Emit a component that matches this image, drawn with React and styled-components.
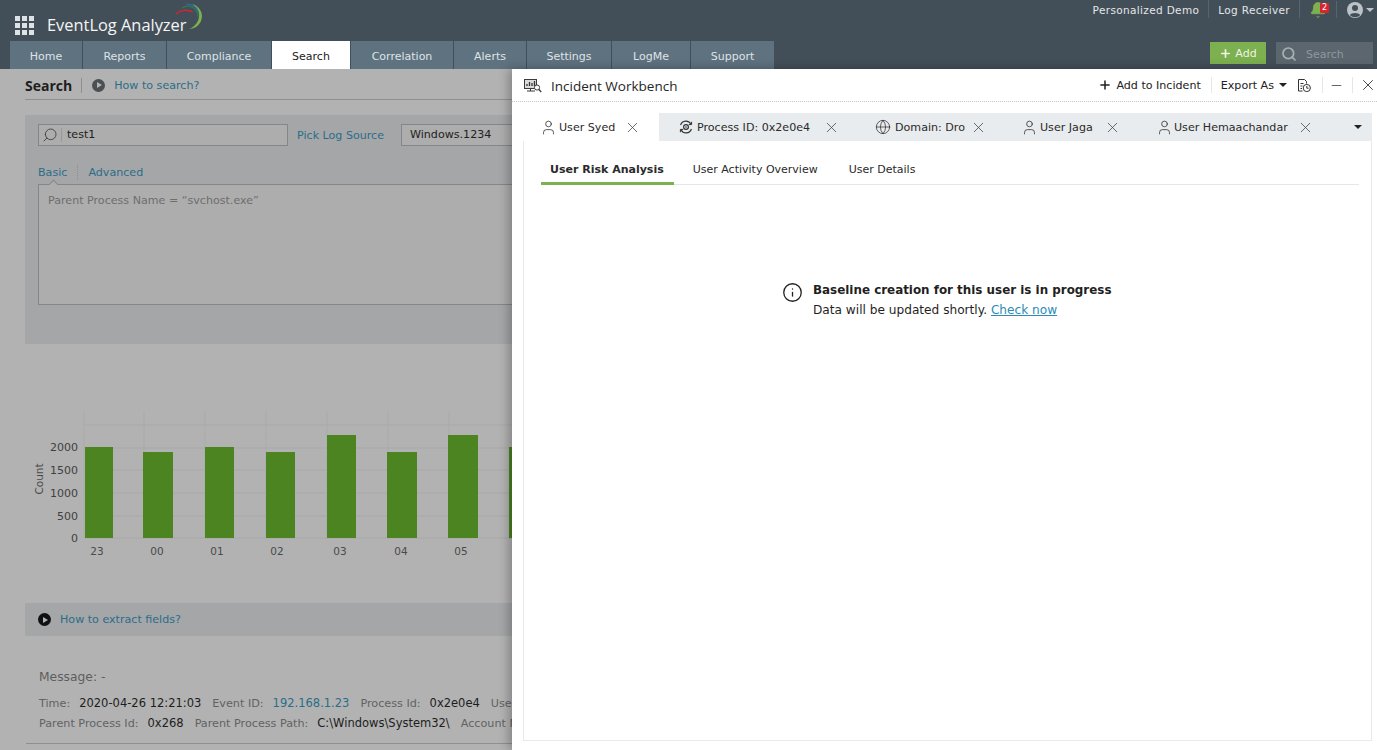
import React from "react";
import styled, { createGlobalStyle } from "styled-components";
import { User, X, Globe, Plus, Minus, Search as SearchIcon, Info, Bell } from "lucide-react";

const Global = createGlobalStyle`
  html, body { margin: 0; padding: 0; background: #b2b2b2; }
  * { box-sizing: border-box; }
  body { font-family: "DejaVu Sans", Verdana, sans-serif; font-size: 11.1px; }
`;

const Page = styled.div`
  position: relative;
  width: 1377px;
  height: 750px;
  overflow: hidden;
  background: #b2b2b2;
`;

const Header = styled.header`
  height: 69px;
  background: #434f58;
  display: flex;
  flex-direction: column;
`;
const TopRow = styled.div`
  height: 41px;
  display: flex;
  justify-content: space-between;
  padding: 0 3px 0 15px;
`;
const Brand = styled.div`
  display: flex;
  align-items: flex-start;
  padding-top: 16px;
`;
const Grid9 = styled.div`
  display: grid;
  grid-template-columns: repeat(3, 5px);
  grid-auto-rows: 5px;
  gap: 2px;
  margin-right: 13px;
  span { background: #dfe2e4; }
`;
const BrandName = styled.div`
  font-family: "Open Sans", sans-serif;
  font-size: 16.4px;
  line-height: 19px;
  color: #f4f5f5;
  position: relative;
  margin-top: -1px;
`;
const LogoArcs = styled.svg`
  position: absolute;
  left: 127px;
  top: -13px;
`;
const TopRight = styled.div`
  display: flex;
  align-items: flex-start;
  color: #e4e6e8;
  font-size: 10.5px;
  letter-spacing: 0.35px;
`;
const TopLink = styled.span`
  padding: 0 9px;
  border-right: 1px solid #59646c;
  height: 18px;
  line-height: 20px;
`;
const BellWrap = styled.span`
  position: relative;
  display: flex;
  margin: 1px 9px 0 9px;
  color: #7db04f;
`;
const Badge = styled.span`
  position: absolute;
  left: 11px;
  top: 2px;
  width: 9px;
  height: 10px;
  background: #d9232e;
  border-radius: 1px;
  color: #fff;
  font-size: 8px;
  line-height: 10px;
  text-align: center;
  letter-spacing: 0;
`;
const Avatar = styled.span`
  display: flex;
  align-items: center;
  gap: 3px;
  margin-top: 1px;
  padding-left: 10px;
  border-left: 1px solid #59646c;
  height: 17px;
  color: #bcc2c7;
`;
const Caret = styled.span`
  display: inline-block;
  width: 0;
  height: 0;
  border-left: ${p => p.$s ?? 4}px solid transparent;
  border-right: ${p => p.$s ?? 4}px solid transparent;
  border-top: ${p => p.$s ?? 4}px solid ${p => p.$c ?? "currentColor"};
`;
const NavRow = styled.div`
  height: 28px;
  display: flex;
  align-items: flex-end;
  justify-content: space-between;
  padding: 0 4px 0 10px;
`;
const NavTabs = styled.nav`
  display: flex;
  gap: 1px;
  height: 28px;
`;
const NavTab = styled.a`
  width: ${p => p.$w}px;
  display: flex;
  align-items: center;
  justify-content: center;
  padding-top: 3px;
  font-size: 11px;
  background: ${p => (p.$active ? "#ffffff" : "#5f7280")};
  color: ${p => (p.$active ? "#222" : "#dfe3e6")};
`;
const NavTools = styled.div`
  display: flex;
  gap: 10px;
  padding-bottom: 5px;
`;
const AddBtn = styled.button`
  width: 56px;
  height: 22px;
  border: 0;
  padding: 0;
  background: #7db04f;
  color: #eef4e8;
  font: inherit;
  font-size: 11px;
  display: flex;
  align-items: center;
  justify-content: center;
  gap: 3px;
`;
const TopSearch = styled.div`
  width: 97px;
  height: 22px;
  background: #5b666e;
  color: #8f989e;
  display: flex;
  align-items: center;
  padding: 2px 0 0 5px;
  gap: 9px;
  font-size: 11px;
`;

const Main = styled.main`
  padding: 0 0 0 25px;
`;
const TitleRow = styled.div`
  height: 31px;
  padding-top: 2px;
  display: flex;
  align-items: center;
  border-bottom: 1px solid #8f8f8f;
`;
const PageTitle = styled.h1`
  margin: 0;
  font-size: 14px;
  font-weight: 700;
  color: #1e1e1e;
  font-family: "Open Sans", sans-serif;
  padding-right: 9px;
  border-right: 1px solid #8e8e8e;
  line-height: 15px;
`;
const HelpLink = styled.a`
  color: #2b6d88;
`;
const PlayDot = styled.span`
  width: 13px;
  height: 13px;
  border-radius: 50%;
  background: ${p => p.$c};
  display: inline-flex;
  align-items: center;
  justify-content: center;
  margin: 0 9px 0 ${p => p.$ml}px;
  &::after {
    content: "";
    border-left: 5px solid #b2b2b2;
    border-top: 3px solid transparent;
    border-bottom: 3px solid transparent;
    margin-left: 1px;
  }
`;
const QueryPanel = styled.section`
  margin-top: 15px;
  height: 229px;
  background: #a5a6a8;
  padding: 9px 13px;
`;
const QueryRow = styled.div`
  display: flex;
  align-items: center;
  height: 22px;
`;
const SearchBox = styled.div`
  width: 250px;
  height: 22px;
  border: 1px solid #858687;
  background: #adadad;
  display: flex;
  align-items: center;
  color: #222;
  padding-left: 3px;
  span { margin-left: 3px; padding-left: 5px; border-left: 1px solid #989898; line-height: 14px; }
`;
const PickLink = styled.a`
  margin-left: 9px;
  color: #2b6d88;
`;
const SourceBox = styled.div`
  margin-left: 17px;
  width: 400px;
  height: 22px;
  border: 1px solid #858687;
  background: #adadad;
  padding-left: 8px;
  line-height: 20px;
  color: #222;
`;
const ModeRow = styled.div`
  display: flex;
  margin-top: 19px;
  height: 15px;
  line-height: 15px;
  color: #2b6d88;
  span:first-child { padding-right: 10px; border-right: 1px dotted #8e8e8e; }
  span:last-child { padding-left: 10px; }
`;
const QueryText = styled.div`
  position: relative;
  margin-top: 4px;
  height: 121px;
  border: 1px solid #858687;
  background: #adadad;
  padding: 9px 9px;
  color: #6e6e6e;
  &::before {
    content: "";
    position: absolute;
    left: 11px;
    top: -4px;
    width: 6px;
    height: 6px;
    background: #adadad;
    border-left: 1px solid #858687;
    border-top: 1px solid #858687;
    transform: rotate(45deg);
  }
`;
const ChartSvg = styled.svg`
  display: block;
  margin: 53px 0 0 -25px;
`;
const ExtractRow = styled.div`
  margin-top: 40px;
  height: 33px;
  background: #a5a6a8;
  display: flex;
  align-items: center;
`;
const Details = styled.div`
  padding-left: 13px;
  margin-top: 32px;
  border-bottom: 1px solid #8f8f8f;
  margin-left: 1px;
  height: 76px;
`;
const MsgLine = styled.div`
  color: #5e5e5e;
  font-size: 12.3px;
  line-height: 18px;
`;
const Fields = styled.div`
  display: flex;
  height: 20px;
  align-items: center;
  white-space: nowrap;
  margin-top: ${p => p.$mt ?? 0}px;
  font-size: 11.5px;
`;
const FieldKey = styled.span`
  color: #626262;
  font-size: 11.2px;
  margin-right: 9px;
`;
const FieldVal = styled.span`
  color: ${p => (p.$link ? "#2b6d88" : "#1d1d1d")};
  margin-right: 11px;
`;

const Drawer = styled.aside`
  position: absolute;
  left: 512px;
  top: 69px;
  width: 865px;
  height: 681px;
  background: #fff;
  box-shadow: -3px 0 10px rgba(0, 0, 0, 0.28);
  display: flex;
  flex-direction: column;
`;
const DrawerHead = styled.div`
  height: 33px;
  flex: none;
  display: flex;
  align-items: center;
  justify-content: space-between;
  border-bottom: 1px dotted #c6c6c6;
  padding: 0 0 0 12px;
`;
const DrawerTitle = styled.div`
  display: flex;
  align-items: center;
  gap: 9px;
  padding-top: 1px;
  font-family: "Open Sans", sans-serif;
  font-size: 13.5px;
  color: #262626;
`;
const DrawerActions = styled.div`
  display: flex;
  align-items: center;
  color: #222;
`;
const ActionGroup = styled.span`
  display: flex;
  align-items: center;
  gap: ${p => p.$gap ?? 5}px;
  height: 16px;
  padding: 0 ${p => p.$pr ?? 10}px 0 ${p => p.$pl ?? 9}px;
  border-right: ${p => (p.$last ? "0" : "1px solid #e6e6e6")};
`;
const Frame = styled.div`
  margin: 11px 5px 9px 11px;
  flex: 1;
  border: 1px solid #e9e9e9;
  border-top: 0;
  display: flex;
  flex-direction: column;
`;
const TabBar = styled.div`
  height: 28px;
  flex: none;
  background: #e9ecee;
  display: flex;
  margin: 0 -1px;
`;
const Tab = styled.div`
  width: ${p => p.$w}px;
  padding-left: ${p => p.$pl}px;
  background: ${p => (p.$active ? "#fff" : "transparent")};
  display: flex;
  align-items: center;
  color: #2a2a2a;
  white-space: nowrap;
`;
const TabLabel = styled.span`
  margin: 0 ${p => p.$mr}px 0 ${p => p.$ml}px;
`;
const TabCaret = styled.div`
  flex: 1;
  display: flex;
  align-items: center;
  justify-content: center;
  padding-left: 13px;
  color: #222;
`;
const SubTabs = styled.div`
  margin: 14px 12px 0 17px;
  height: 30px;
  flex: none;
  display: flex;
  border-bottom: 1px solid #e6e6e6;
`;
const SubTab = styled.div`
  height: 30px;
  padding: 2px ${p => p.$pr ?? 15}px 0 ${p => p.$pl ?? 15}px;
  display: flex;
  align-items: center;
  font-size: 11px;
  font-weight: ${p => (p.$active ? 700 : 400)};
  color: #2a2a2a;
  border-bottom: 3px solid ${p => (p.$active ? "#7db04f" : "transparent")};
`;
const Notice = styled.div`
  margin: 95px 0 0 258px;
  display: flex;
  align-items: flex-start;
  gap: 10px;
  color: #1f1f1f;
  svg { margin-top: 2px; }
`;
const NoticeText = styled.div`
  font-size: 12.15px;
  line-height: 20px;
  strong { display: block; font-weight: 700; font-size: 11.92px; }
  a { color: #2b8cb8; text-decoration: underline; }
`;

const bars = [
  [85, 28, 447, "23", 97],
  [143, 30, 452, "00", 157],
  [205, 29, 447, "01", 217],
  [266, 29, 452, "02", 277],
  [327, 29, 435, "03", 340],
  [387, 30, 452, "04", 401],
  [448, 30, 435, "05", 461],
];
const yTicks = [["2000", 447], ["1500", 470], ["1000", 493], ["500", 516], ["0", 538]];

function Chart() {
  const o = 397;
  return (
    <ChartSvg width="512" height="166" viewBox={`0 ${o} 512 166`}>
      {[425, 448, 470, 493, 516, 538].map(y => (
        <line key={y} x1="84" x2="512" y1={y} y2={y} stroke="#a8a8a8" />
      ))}
      {[84, 144, 205, 266, 327, 388, 449].map(x => (
        <line key={x} x1={x} x2={x} y1="411" y2="538" stroke="#aaaaaa" />
      ))}
      {bars.map(([x, w, y]) => (
        <rect key={x} x={x} y={y} width={w} height={538 - y} fill="#4b8420" />
      ))}
      <rect x="509" y="447" width="3" height="91" fill="#4b8420" />
      {yTicks.map(([t, y]) => (
        <text key={t} x="78" y={y + 4} textAnchor="end" fontSize="11" fill="#3f3f3f" fontFamily="DejaVu Sans">{t}</text>
      ))}
      {bars.map(([x, , , t, cx]) => (
        <text key={t} x={cx} y="555" textAnchor="middle" fontSize="10.5" fill="#4a4a4a" fontFamily="DejaVu Sans">{t}</text>
      ))}
      <text transform="translate(43 479) rotate(-90)" textAnchor="middle" fontSize="10.5" fill="#4a4a4a" fontFamily="DejaVu Sans">Count</text>
    </ChartSvg>
  );
}

const WorkbenchIcon = () => (
  <svg width="18" height="16" viewBox="0 0 18 16" fill="none" stroke="#3c3c3c">
    <rect x="0.5" y="1.5" width="12" height="9" fill="#dcdcdc" />
    <path d="M3 8V6M5.5 8V4M8 8V5M10.5 8V3" strokeWidth="1.3" stroke="#333" />
    <path d="M3 13h8M6.5 10.5V13" />
    <circle cx="13" cy="9.5" r="2.6" fill="#fff" />
    <path d="M15 11.5l2.2 2.5" strokeWidth="1.4" />
  </svg>
);
const ProcessIcon = () => (
  <svg width="14" height="14" viewBox="0 0 14 14" fill="none" stroke="#333" strokeWidth="1.2">
    <path d="M1.6 5A5.6 5.6 0 0 1 12 4.2M12.4 9A5.6 5.6 0 0 1 2 9.8" />
    <path d="M12.6 1.8V4.6H9.8M1.4 12.2V9.4H4.2" strokeWidth="1" />
    <circle cx="7" cy="7" r="2.4" />
    <circle cx="7" cy="7" r="0.8" fill="#333" stroke="none" />
  </svg>
);
const HistoryIcon = () => (
  <svg width="15" height="15" viewBox="0 0 15 15" fill="none" stroke="#333" strokeWidth="1">
    <path d="M5.5 13H1.5V1.5H7.5L9.5 3.5V5.5" />
    <path d="M3.5 5.5H6.5M3.5 8H5.5M3.5 10.5H5" />
    <circle cx="9.8" cy="10" r="3.6" />
    <path d="M9.8 8V10.2H11.6" />
  </svg>
);
const AvatarIcon = () => (
  <svg width="16" height="16" viewBox="0 0 16 16">
    <circle cx="8" cy="8" r="8" fill="#bcc2c7" />
    <circle cx="8" cy="6" r="3" fill="#434f58" />
    <path d="M2.8 13.2C4 10.4 12 10.4 13.2 13.2A7.6 7.6 0 0 1 2.8 13.2Z" fill="#434f58" />
  </svg>
);

const tabs = [
  { w: 136, label: "User Syed", icon: "user", active: true, pl: 17, ml: 2, mr: 9 },
  { w: 196, label: "Process ID: 0x2e0e4", icon: "proc", pl: 20, ml: 4, mr: 13 },
  { w: 150, label: "Domain: Dro", icon: "globe", pl: 20, ml: 4, mr: 5 },
  { w: 133, label: "User Jaga", icon: "user", pl: 16, ml: 2, mr: 11 },
  { w: 192, label: "User Hemaachandar", icon: "user", pl: 18, ml: 1, mr: 9 },
];
const TabIcon = ({ k }) =>
  k === "user" ? <User size={17} strokeWidth={1.1} /> :
  k === "proc" ? <ProcessIcon /> : <Globe size={16} strokeWidth={1.1} />;

export default function App() {
  return (
    <Page>
      <Global />
      <Header>
        <TopRow>
          <Brand>
            <Grid9>{Array.from({ length: 9 }, (_, i) => <span key={i} />)}</Grid9>
            <BrandName>
              EventLog Analyzer
              <LogoArcs width="34" height="30" viewBox="0 0 34 30" fill="none">
                <path d="M2 12C6 8 13 7 19 10" stroke="#d9232e" strokeWidth="1.3" />
                <path d="M8 6C14 2 24 5 24 15" stroke="#2c7a5e" strokeWidth="1.2" />
                <path d="M12 2C20 2 26 8 26 16" stroke="#2f6f9f" strokeWidth="1.2" />
                <path d="M18 2C26 4 30 12 27 19C25 24 20 27 15 27C20 25 24 21 25 15C26 9 23 5 18 2Z" fill="#7db04f" />
              </LogoArcs>
            </BrandName>
          </Brand>
          <TopRight>
            <TopLink>Personalized Demo</TopLink>
            <TopLink>Log Receiver</TopLink>
            <BellWrap>
              <Bell size={18} fill="#7db04f" strokeWidth={1} />
              <Badge>2</Badge>
            </BellWrap>
            <Avatar>
              <AvatarIcon />
              <Caret $s={4} $c="#bcc2c7" />
            </Avatar>
          </TopRight>
        </TopRow>
        <NavRow>
          <NavTabs>
            <NavTab $w={72}>Home</NavTab>
            <NavTab $w={83}>Reports</NavTab>
            <NavTab $w={104}>Compliance</NavTab>
            <NavTab $w={78} $active>Search</NavTab>
            <NavTab $w={102}>Correlation</NavTab>
            <NavTab $w={72}>Alerts</NavTab>
            <NavTab $w={84}>Settings</NavTab>
            <NavTab $w={78}>LogMe</NavTab>
            <NavTab $w={83}>Support</NavTab>
          </NavTabs>
          <NavTools>
            <AddBtn><Plus size={13} strokeWidth={3} />Add</AddBtn>
            <TopSearch><SearchIcon size={16} strokeWidth={2.6} color="#a9b0b5" />Search</TopSearch>
          </NavTools>
        </NavRow>
      </Header>

      <Main>
        <TitleRow>
          <PageTitle>Search</PageTitle>
          <PlayDot $c="#4a4f54" $ml={10} />
          <HelpLink>How to search?</HelpLink>
        </TitleRow>
        <QueryPanel>
          <QueryRow>
            <SearchBox>
              <SearchIcon size={16} strokeWidth={1.4} style={{ transform: "scaleX(-1)" }} color="#444" />
              <span>test1</span>
            </SearchBox>
            <PickLink>Pick Log Source</PickLink>
            <SourceBox>Windows.1234</SourceBox>
          </QueryRow>
          <ModeRow><span>Basic</span><span>Advanced</span></ModeRow>
          <QueryText>Parent Process Name = “svchost.exe”</QueryText>
        </QueryPanel>
        <Chart />
        <ExtractRow>
          <PlayDot $c="#111" $ml={13} />
          <HelpLink>How to extract fields?</HelpLink>
        </ExtractRow>
        <Details>
          <MsgLine>Message: -</MsgLine>
          <Fields $mt={7}>
            <FieldKey>Time:</FieldKey><FieldVal>2020-04-26 12:21:03</FieldVal>
            <FieldKey>Event ID:</FieldKey><FieldVal $link>192.168.1.23</FieldVal>
            <FieldKey>Process Id:</FieldKey><FieldVal>0x2e0e4</FieldVal>
            <FieldKey>User Name:</FieldKey>
          </Fields>
          <Fields>
            <FieldKey>Parent Process Id:</FieldKey><FieldVal>0x268</FieldVal>
            <FieldKey>Parent Process Path:</FieldKey><FieldVal>C:\Windows\System32\</FieldVal>
            <FieldKey>Account Name:</FieldKey>
          </Fields>
        </Details>
      </Main>

      <Drawer>
        <DrawerHead>
          <DrawerTitle><WorkbenchIcon />Incident Workbench</DrawerTitle>
          <DrawerActions>
            <ActionGroup $gap={4}><Plus size={14} strokeWidth={2.6} />Add to Incident</ActionGroup>
            <ActionGroup $pr={10} $last>Export As <Caret $s={4} /></ActionGroup>
            <ActionGroup $pl={0} $pr={10}><HistoryIcon /></ActionGroup>
            <ActionGroup $pl={6} $pr={8}><Minus size={15} strokeWidth={1.1} /></ActionGroup>
            <ActionGroup $pl={6} $pr={0} $last><X size={18} strokeWidth={1.1} /></ActionGroup>
          </DrawerActions>
        </DrawerHead>
        <Frame>
          <TabBar>
            {tabs.map(t => (
              <Tab key={t.label} $w={t.w} $active={t.active} $pl={t.pl}>
                <TabIcon k={t.icon} />
                <TabLabel $ml={t.ml} $mr={t.mr}>{t.label}</TabLabel>
                <X size={17} strokeWidth={1.1} color="#444" />
              </Tab>
            ))}
            <TabCaret><Caret $s={4} /></TabCaret>
          </TabBar>
          <SubTabs>
            <SubTab $active $pl={9} $pr={10}>User Risk Analysis</SubTab>
            <SubTab $pl={19} $pr={16}>User Activity Overview</SubTab>
            <SubTab>User Details</SubTab>
          </SubTabs>
          <Notice>
            <Info size={21} strokeWidth={1.5} color="#222" />
            <NoticeText>
              <strong>Baseline creation for this user is in progress</strong>
              Data will be updated shortly. <a>Check now</a>
            </NoticeText>
          </Notice>
        </Frame>
      </Drawer>
    </Page>
  );
}
